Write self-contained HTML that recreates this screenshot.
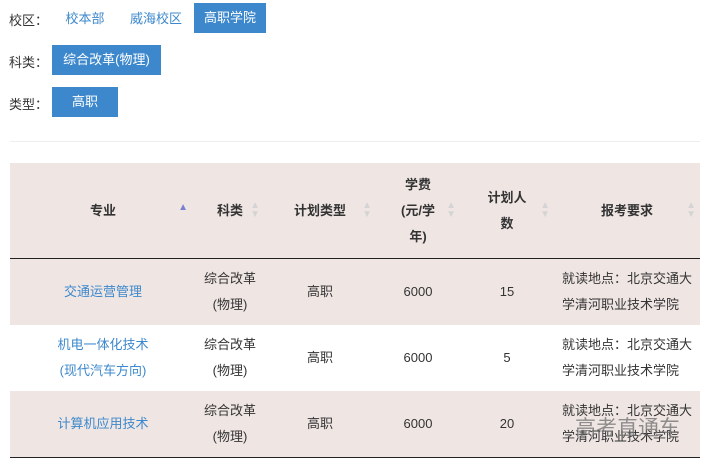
<!DOCTYPE html><html><head><meta charset="utf-8"><style>
body{margin:0;background:#fff;font-family:"Liberation Sans","Noto Sans CJK SC",sans-serif;font-size:13px;color:#333;width:713px;height:469px;overflow:hidden;position:relative}
.lab{position:absolute;left:9px;color:#333;font-size:13px}
.btn{position:absolute;height:30px;line-height:30px;font-size:13px;text-align:center}
.on{background:#3d88cc;color:#fff}
.off{color:#3d88cc}
table{position:absolute;left:10px;top:163px;width:690px;border-collapse:collapse;table-layout:fixed}
th{background:#efe6e4;height:95px;font-weight:bold;line-height:26px;border-bottom:1px solid #222;position:relative;padding:0 4px}
td{height:66px;text-align:center;line-height:26px;padding:0 4px}
tr.a td{background:#efe6e4}
tr.b td{background:#fff}
tr:last-child td{border-bottom:1px solid #222}
.l{color:#3d88cc}
.s{position:absolute;right:4px;top:38px;font-size:10px;color:#d4d4d4;line-height:9px}
td.r{text-align:left;padding-left:8px}
</style></head><body>
<div class="lab" style="top:10px">校区：</div>
<div class="btn off" style="left:56px;top:4px;width:58px">校本部</div>
<div class="btn off" style="left:122px;top:4px;width:68px">威海校区</div>
<div class="btn on" style="left:194px;top:3px;width:72px">高职学院</div>
<div class="lab" style="top:52px">科类：</div>
<div class="btn on" style="left:52px;top:45px;width:109px">综合改革(物理)</div>
<div class="lab" style="top:94px">类型：</div>
<div class="btn on" style="left:52px;top:87px;width:66px">高职</div>
<div style="position:absolute;left:10px;top:141px;width:690px;height:1px;background:#eee"></div>
<table>
<colgroup><col style="width:186px"><col style="width:68px"><col style="width:112px"><col style="width:84px"><col style="width:94px"><col style="width:146px"></colgroup>
<tr><th>专业<span class="s" style="color:#7b7fd0;right:8px;top:40px">▲</span></th><th>科类<span class="s">▲<br>▼</span></th><th>计划类型<span class="s">▲<br>▼</span></th><th>学费<br>(元/学<br>年)<span class="s">▲<br>▼</span></th><th>计划人<br>数<span class="s">▲<br>▼</span></th><th>报考要求<span class="s">▲<br>▼</span></th></tr>
<tr class="a"><td class="l">交通运营管理</td><td>综合改革<br>(物理)</td><td>高职</td><td>6000</td><td>15</td><td class="r">就读地点：北京交通大学清河职业技术学院</td></tr>
<tr class="b"><td class="l">机电一体化技术<br>(现代汽车方向)</td><td>综合改革<br>(物理)</td><td>高职</td><td>6000</td><td>5</td><td class="r">就读地点：北京交通大学清河职业技术学院</td></tr>
<tr class="a"><td class="l">计算机应用技术</td><td>综合改革<br>(物理)</td><td>高职</td><td>6000</td><td>20</td><td class="r">就读地点：北京交通大学清河职业技术学院</td></tr>
</table>
<div style="position:absolute;left:575px;top:412px;font-size:21px;color:rgba(110,110,110,.75)">高考直通车</div>
</body></html>
